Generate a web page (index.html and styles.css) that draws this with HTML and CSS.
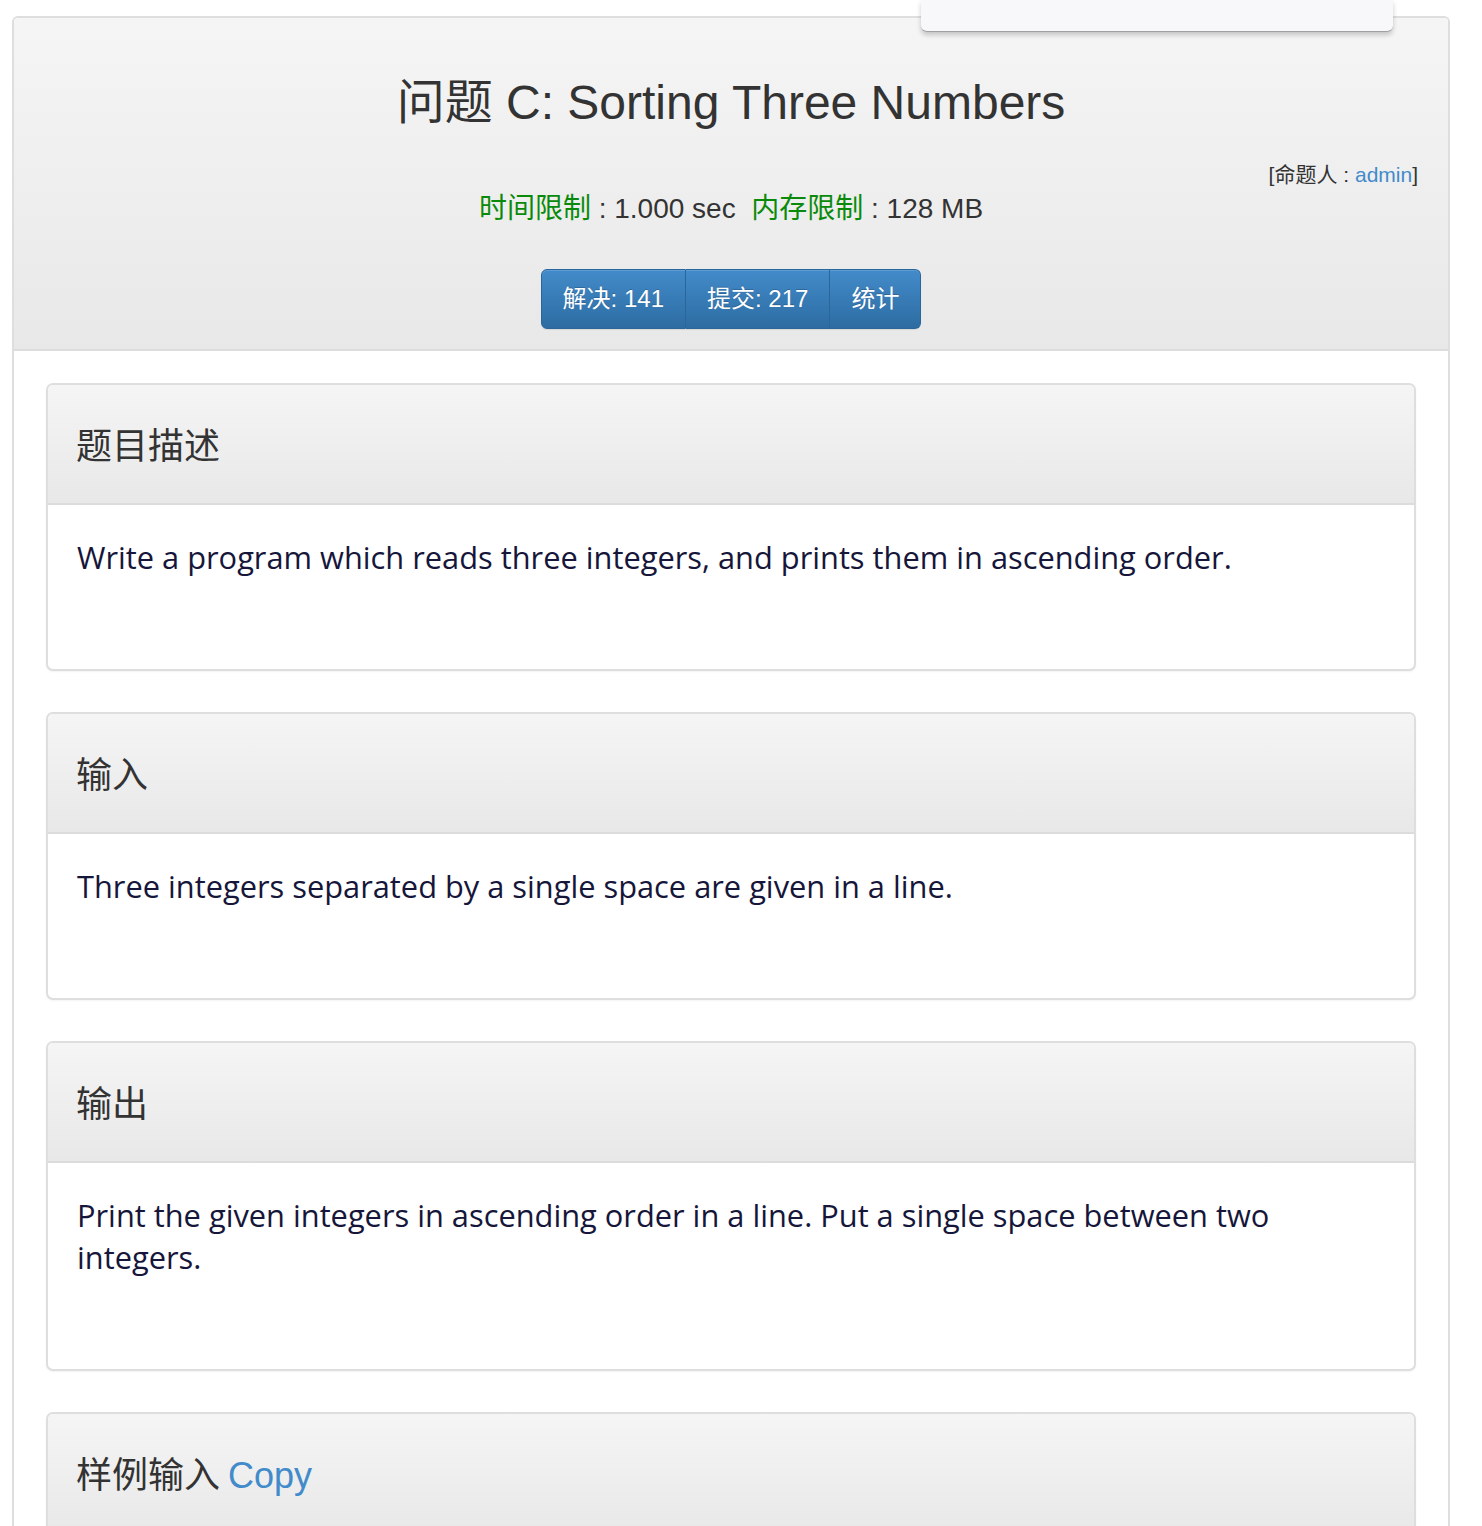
FILE: index.html
```html
<!DOCTYPE html>
<html lang="zh-CN">
<head>
<meta charset="utf-8">
<title>问题 C: Sorting Three Numbers</title>
<link rel="stylesheet" href="styles.css">
</head>
<body>
<div class="toast"></div>
<div class="page">
  <div class="outer">
    <div class="outer-head">
      <h1 class="title">问题 C: Sorting Three Numbers</h1>
      <div class="limits-row">
        <div></div>
        <div class="limits"><span class="lbl">时间限制</span> : 1.000 sec&nbsp;&nbsp;<span class="lbl">内存限制</span> : 128 MB</div>
        <div class="author">[命题人 : <a href="#">admin</a>]</div>
      </div>
      <div class="btns">
        <a class="btn" href="#">解决: 141</a><a class="btn" href="#">提交: 217</a><a class="btn" href="#">统计</a>
      </div>
    </div>
    <div class="outer-body">
      <div class="panel">
        <div class="panel-head"><h2>题目描述</h2></div>
        <div class="panel-body"><p>Write a program which reads three integers, and prints them in ascending order.</p></div>
      </div>
      <div class="panel">
        <div class="panel-head"><h2>输入</h2></div>
        <div class="panel-body"><p>Three integers separated by a single space are given in a line.</p></div>
      </div>
      <div class="panel">
        <div class="panel-head"><h2>输出</h2></div>
        <div class="panel-body"><p>Print the given integers in ascending order in a line. Put a single space between two integers.</p></div>
      </div>
      <div class="panel">
        <div class="panel-head"><h2>样例输入 <a class="copy" href="#">Copy</a></h2></div>
        <div class="panel-body"><p>2 3 1</p></div>
      </div>
    </div>
  </div>
</div>
</body>
</html>
```

FILE: styles.css
```css
html, body {
  margin: 0;
  padding: 0;
  background: #fff;
}
body {
  font-family: "Liberation Sans", Arial, "Noto Sans CJK SC", sans-serif;
  color: #333;
}
a {
  text-decoration: none;
  color: #428bca;
}
.page {
  padding: 16px 32px 0 12px;
}
.outer {
  border: 2px solid #dedede;
  border-bottom: none;
  border-radius: 6px 6px 0 0;
}
.outer-head {
  background: linear-gradient(to bottom, #f5f5f5 0%, #e8e8e8 100%);
  border-bottom: 2px solid #dcdcdc;
  border-radius: 5px 5px 0 0;
  padding: 58px 30px 20px;
  text-align: center;
}
.title {
  margin: 0;
  font-size: 48px;
  line-height: 53px;
  font-weight: normal;
  color: #333;
}
.limits-row {
  display: grid;
  grid-template-columns: 1fr auto 1fr;
  margin-top: 60px;
}
.limits {
  font-size: 28px;
  line-height: 40px;
  color: #333;
}
.lbl {
  color: #0a8a0a;
}
.author {
  text-align: right;
  font-size: 21px;
  line-height: 30px;
  margin-top: -29px;
  align-self: start;
}
.btns {
  display: inline-flex;
  margin-top: 40px;
  border-radius: 6px;
  box-shadow: 0 1px 1px rgba(0,0,0,0.08);
}
.btn {
  display: block;
  color: #fff;
  font-size: 24px;
  line-height: 33px;
  padding: 12px 21px 13px 21px;
  background: linear-gradient(to bottom, #428bca 0%, #2d6ca2 100%);
  border: 1px solid #2b669a;
  border-left-width: 0;
  text-shadow: 0 -1px 0 rgba(0,0,0,0.2);
  box-shadow: inset 0 1px 0 rgba(255,255,255,0.15);
}
.btn:first-child {
  border-left-width: 1px;
  border-radius: 6px 0 0 6px;
}
.btn:last-child {
  border-radius: 0 6px 6px 0;
}
.outer-body {
  padding: 32px 32px 0;
  display: flex;
  flex-direction: column;
  gap: 41px;
}
.panel {
  border: 2px solid #dedede;
  border-radius: 7px;
  box-shadow: 0 1px 2px rgba(0,0,0,0.05);
  background: #fff;
}
.panel-head {
  background: linear-gradient(to bottom, #f5f5f5 0%, #e8e8e8 100%);
  border-bottom: 2px solid #dcdcdc;
  border-radius: 5px 5px 0 0;
  padding: 38px 30px 40px 28px;
}
.panel-head h2 {
  margin: 0;
  font-family: "Noto Sans CJK SC", "Liberation Sans", sans-serif;
  font-size: 36px;
  line-height: 40px;
  font-weight: normal;
  color: #333;
}
.copy {
  font-family: "Liberation Sans", Arial, sans-serif;
  color: #428bca;
}
.panel-body {
  padding: 31px 30px 91px 29px;
}
.panel-body p {
  margin: 0;
  font-family: "Open Sans", "Noto Sans CJK SC", sans-serif;
  font-size: 30.8px;
  line-height: 42px;
  color: #16163a;
}
.toast {
  position: absolute;
  top: 0;
  left: 921px;
  width: 472px;
  height: 31px;
  background: #f8f8fa;
  border-bottom: 1px solid #a0a0a0;
  border-radius: 0 0 6px 6px;
  box-shadow: 0 3px 5px rgba(0,0,0,0.2);
  z-index: 5;
}
```
